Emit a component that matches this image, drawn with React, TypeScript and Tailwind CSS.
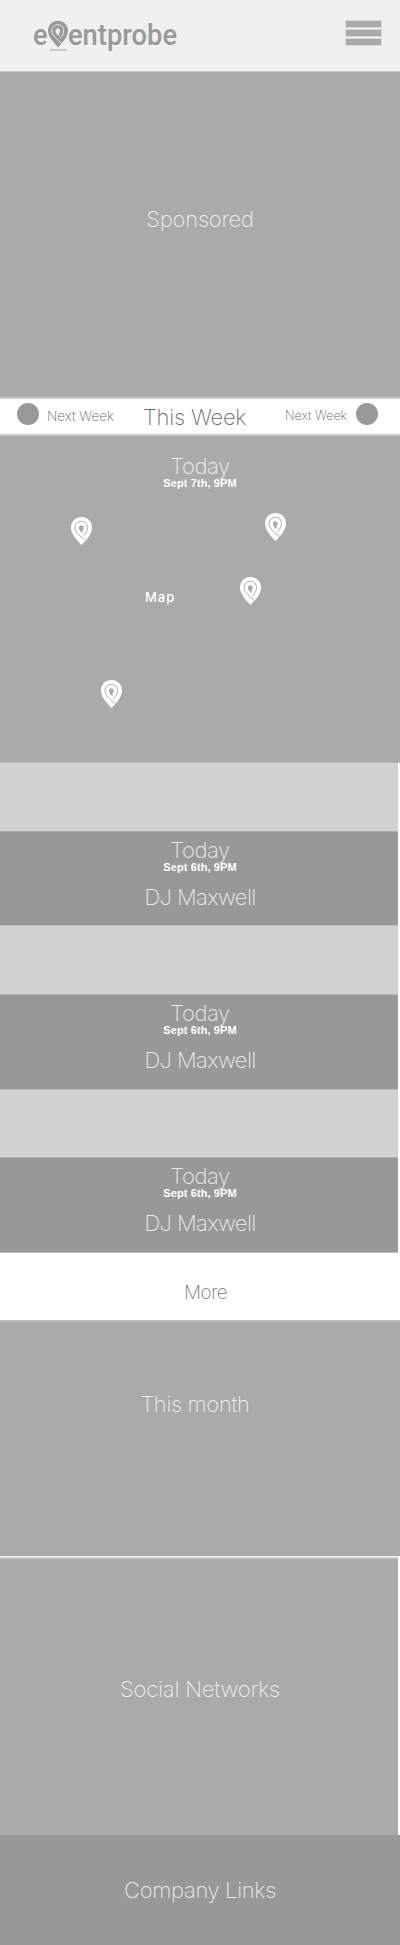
type PinProps = { className: string; fill: string; line: string };

function Pin({ className, fill, line }: PinProps) {
  return (
    <svg viewBox="0 0 21 28" className={className} fill="none">
      <path
        d="M10.5 0C4.5 0 0 4.6 0 10.4C0 17 5.6 22.6 10.6 28C15.6 22.6 21 17 21 10.4C21 4.6 16.5 0 10.5 0Z"
        fill={fill}
      />
      <path
        d="M14.4 24C9.5 18.9 4 15.8 4 10.6C4 6.8 7 4.3 10.4 4.3C13.8 4.3 16.5 6.8 16.5 10.6C16.5 13.4 14.9 16.2 12.7 18.6"
        stroke={line}
        strokeWidth="1"
      />
      <path d="M10.3 8.3C11.8 8.3 12.8 9.4 12.8 10.9C12.8 12.1 12.2 13.1 11.2 13.6L12.2 15.2L11.3 15.8C9.2 14.2 7.9 12.8 7.9 10.9C7.9 9.4 8.9 8.3 10.3 8.3Z" fill={line} />
    </svg>
  );
}

const title = "block text-center text-[22px] leading-6 font-extralight whitespace-nowrap opacity-80";
const dateLine = "-mt-[3px] block text-center font-['Liberation_Sans',sans-serif] text-[11px] leading-4 font-bold tracking-[0.1px]";

function EventCard() {
  return (
    <div className="h-[163.33px] w-[398px]">
      <div className="h-[68.5px] border-b border-[#b0b0b0] bg-[#d1d1d1]" />
      <div className="h-[94.83px] border-b border-[#bcbcbc] bg-[#989898] pt-[6px] pl-[2px] text-white">
        <span className={`${title} tracking-[-0.4px]`}>Today</span>
        <span className={dateLine}>Sept 6th, 9PM</span>
        <span className={`${title} mt-[10px] tracking-[-0.6px]`}>DJ Maxwell</span>
      </div>
    </div>
  );
}

const pins = [
  { id: "a", place: "left-[71px] top-[81px]" },
  { id: "b", place: "left-[265px] top-[77px]" },
  { id: "c", place: "left-[240px] top-[141px]" },
  { id: "d", place: "left-[101px] top-[244px]" },
];

export default function App() {
  return (
    <div className="flex h-[1945px] w-[400px] flex-col overflow-hidden bg-white font-['Inter',sans-serif] antialiased">
      <header className="flex h-[72px] shrink-0 items-start justify-between border-b border-[#c8c8c8] bg-[#f0f0f0] pr-[18px] pl-[33px]">
        <div className="mt-[17px] flex h-9 w-[150px] items-start font-['Roboto',sans-serif] text-[30px] leading-9 font-medium text-[#999]">
          <span className="w-[15px] shrink-0 origin-left scale-x-90">e</span>
          <span className="mt-[3px] flex w-[20px] shrink-0 flex-col items-center">
            <Pin className="h-[28px] w-[20px]" fill="#999" line="#f0f0f0" />
            <span className="mt-px h-[1.5px] w-[17px] bg-[#ccc]" />
          </span>
          <span className="origin-left scale-x-[.91]">entprobe</span>
        </div>
        <div className="mt-5 flex w-[37px] flex-col gap-[1px]">
          <div className="h-[8px] border border-[#d8d8d8] bg-[#aaa]" />
          <div className="h-[8px] border border-[#d8d8d8] bg-[#aaa]" />
          <div className="h-[8px] border border-[#d8d8d8] bg-[#aaa]" />
        </div>
      </header>

      <section className="h-[325px] shrink-0 bg-[#aaa] pt-[135px] text-white">
        <span className={`${title} tracking-[-0.2px]`}>Sponsored</span>
      </section>

      <nav className="flex h-[39px] shrink-0 items-start border-y-2 border-[#c9c9c9] bg-white pl-[17px] text-[#666]">
        <div className="mt-[4px] size-[22px] shrink-0 rounded-full bg-[#999]" />
        <span className="mt-[9px] ml-[8px] w-[67px] text-[13.5px] leading-4 font-extralight whitespace-nowrap">Next Week</span>
        <span className="mt-[6px] ml-[29px] w-[105px] text-[22px] leading-6 font-extralight tracking-[-0.2px] whitespace-nowrap text-[#444] opacity-80">This Week</span>
        <span className="mt-[9px] ml-[37px] w-[61px] text-[12.5px] leading-4 font-extralight whitespace-nowrap">Next Week</span>
        <div className="mt-[4px] ml-[10px] size-[22px] shrink-0 rounded-full bg-[#999]" />
      </nav>

      <section className="relative h-[327px] shrink-0 border-b border-[#b8b8b8] bg-[#aaa] pt-[18px] text-white">
        <span className={`${title} tracking-[-0.4px]`}>Today</span>
        <span className={dateLine}>Sept 7th, 9PM</span>
        <span className="mt-[96px] ml-[145px] block text-[13px] leading-5 font-medium tracking-[1px]">Map</span>
        {pins.map((pin) => (
          <div key={pin.id} className={`absolute ${pin.place}`}>
            <Pin className="h-[28px] w-[21px]" fill="#fff" line="#aaa" />
          </div>
        ))}
      </section>

      <section className="h-[490px] shrink-0">
        <EventCard />
        <EventCard />
        <EventCard />
      </section>

      <section className="h-[67px] shrink-0 pt-[28px] pl-[184px] text-[#555]">
        <span className="block text-[19px] leading-6 font-extralight tracking-[-0.5px] opacity-80">More</span>
      </section>

      <section className="h-[236px] shrink-0 border-t-2 border-[#bbb] bg-[#aaa] pt-[70px] pr-[10px] text-white">
        <span className={`${title} tracking-[-0.35px]`}>This month</span>
      </section>

      <section className="mt-[1px] h-[278px] w-[398px] shrink-0 border-t-2 border-[#ccc] bg-[#aaa] pt-[118px] pl-[2px] text-white">
        <span className={`${title} tracking-[-0.2px]`}>Social Networks</span>
      </section>

      <footer className="h-[110px] shrink-0 bg-[#989898] pt-[43px] text-white">
        <span className={`${title} tracking-[-0.35px]`}>Company Links</span>
      </footer>
    </div>
  );
}
